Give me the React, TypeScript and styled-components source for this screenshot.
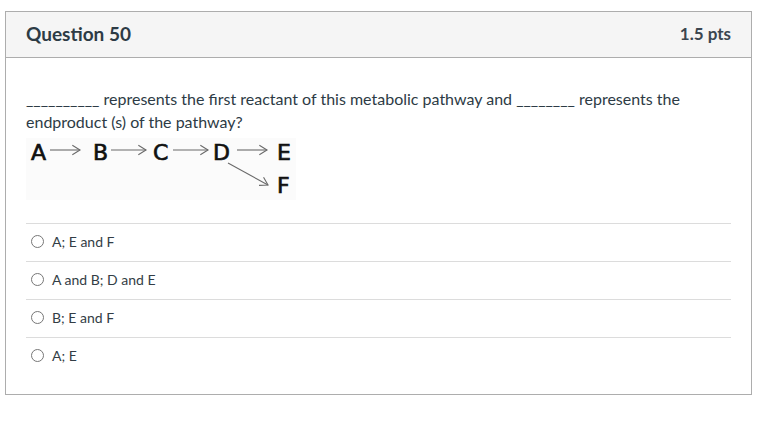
import styled, { createGlobalStyle } from "styled-components";

const GlobalStyle = createGlobalStyle`
	body {
		margin: 0;
		background: #ffffff;
		font-family: Lato, "Liberation Sans", sans-serif;
		color: #2d3b45;
	}
`

const Card = styled.div`
	box-sizing: border-box;
	width: 747px;
	margin: 11px 0 0 5px;
	border: 1px solid #adadad;
`

const Header = styled.div`
	display: flex;
	justify-content: space-between;
	align-items: center;
	box-sizing: border-box;
	height: 46px;
	padding: 0 20px 3px 20px;
	background: #f5f5f5;
	border-bottom: 1px solid #adadad;
`

const Title = styled.h2`
	margin: 0;
	font-size: 19px;
	font-weight: 700;
`

const Points = styled.span`
	font-size: 17px;
	font-weight: 700;
	color: #3b4650;
`

const Body = styled.div`
	padding: 29px 20px 19px 20px;
`

const Prompt = styled.p`
	margin: 0;
	font-size: 16px;
	line-height: 23px;
`

const Diagram = styled.svg`
	display: block;
	margin-top: 5px;
	background: #fbfbfb;
`

const Answers = styled.div`
	margin-top: 23px;
`

const Answer = styled.label`
	display: flex;
	align-items: center;
	gap: 8px;
	box-sizing: border-box;
	height: 38px;
	padding: 0 0 2px 5px;
	border-top: 1px solid #dcdcdc;
	font-size: 14px;
	color: #333d45;
`

const Radio = styled.span`
	box-sizing: border-box;
	width: 13px;
	height: 13px;
	border: 1px solid #777;
	border-radius: 50%;
`

const letters = [
	{ t: "A", x: 5, y: 22 },
	{ t: "B", x: 67, y: 22 },
	{ t: "C", x: 127, y: 22 },
	{ t: "D", x: 187, y: 22 },
	{ t: "E", x: 251, y: 22 },
	{ t: "F", x: 251, y: 55 },
]

const arrows = [
	[24, 12, 54, 12],
	[85, 12, 120, 12],
	[147, 12, 182, 12],
	[211, 12, 241, 12],
	[202, 25, 242, 47],
]

const arrowHead = (x1: number, y1: number, x2: number, y2: number) => {
	const a = Math.atan2(y2 - y1, x2 - x1)
	const l = 9
	const s = 0.55
	const p1 = [x2 - l * Math.cos(a - s), y2 - l * Math.sin(a - s)]
	const p2 = [x2 - l * Math.cos(a + s), y2 - l * Math.sin(a + s)]
	return `M${p1[0]},${p1[1]} L${x2},${y2} L${p2[0]},${p2[1]}`
}

const options = ["A; E and F", "A and B; D and E", "B; E and F", "A; E"]

const App = () => {
	return (
		<>
			<GlobalStyle />
			<Card>
				<Header>
					<Title>Question 50</Title>
					<Points>1.5 pts</Points>
				</Header>
				<Body>
					<Prompt>
						__________ represents the first reactant of this metabolic pathway and ________ represents the endproduct (s) of the pathway?
					</Prompt>
					<Diagram width="270" height="62" viewBox="0 0 270 62">
						{arrows.map(([x1, y1, x2, y2], i) => (
							<g key={i} stroke="#6a6a6a" strokeWidth="1.1" fill="none">
								<line x1={x1} y1={y1} x2={x2} y2={y2} />
								<path d={arrowHead(x1, y1, x2, y2)} />
							</g>
						))}
						{letters.map(l => (
							<text key={l.t} x={l.x} y={l.y} fontFamily="'DejaVu Sans', sans-serif" fontSize="22" fill="#111" stroke="#111" strokeWidth="0.7">{l.t}</text>
						))}
					</Diagram>
					<Answers>
						{options.map(o => (
							<Answer key={o}>
								<Radio />
								{o}
							</Answer>
						))}
					</Answers>
				</Body>
			</Card>
		</>
	)
}

export default App
